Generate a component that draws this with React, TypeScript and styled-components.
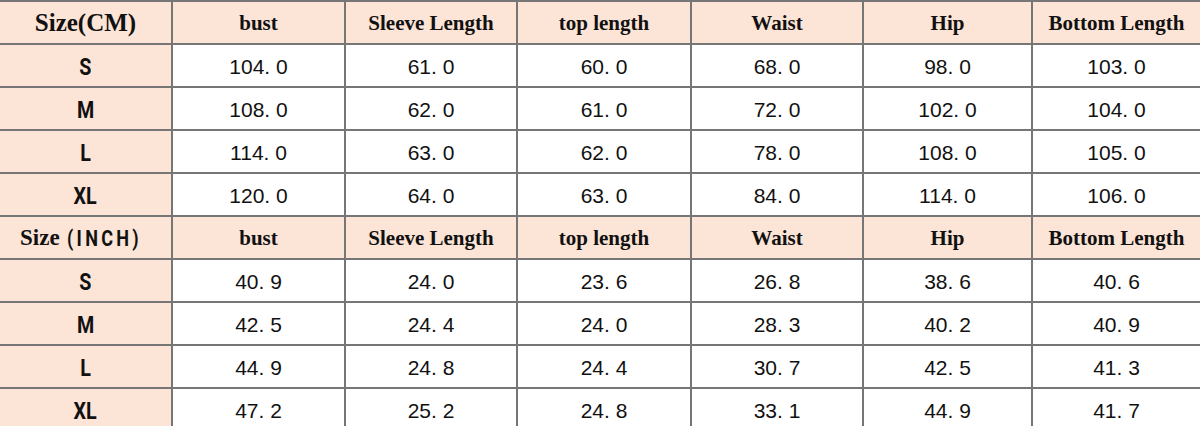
import React from 'react';
import styled, { createGlobalStyle } from 'styled-components';

const GlobalStyle = createGlobalStyle`
  html, body {
    margin: 0;
    padding: 0;
    background: #ffffff;
    overflow: hidden;
  }
`;

const LINE = '#767676';
const PEACH = '#fce4d6';

const Sheet = styled.div`
  width: 1200px;
  height: 426px;
  overflow: hidden;
  border-top: 2px solid ${LINE};
  box-sizing: border-box;
`;

const Row = styled.div<{ $head?: boolean }>`
  display: grid;
  grid-template-columns: 173px 173px 172px 174px 172px 169px 1fr;
  height: 43px;
  background: ${(p) => (p.$head ? PEACH : '#ffffff')};
`;

const Cell = styled.div<{ $last?: boolean }>`
  display: flex;
  align-items: center;
  justify-content: center;
  box-sizing: border-box;
  border-bottom: 2px solid ${LINE};
  border-right: ${(p) => (p.$last ? 'none' : `2px solid ${LINE}`)};
  white-space: nowrap;
  color: #111;
`;

const SizeCell = styled(Cell)`
  background: ${PEACH};
  padding-top: 2px;
`;

/* tall, narrow bold sans used for the size letters */
const Narrow = styled.span<{ $size?: number }>`
  display: inline-block;
  font-family: Roboto, 'Liberation Sans', sans-serif;
  font-weight: bold;
  font-size: ${(p) => p.$size ?? 24}px;
  transform: scaleX(0.82);
  transform-origin: center;
`;

const HeadCell = styled(Cell)`
  font-family: 'Liberation Serif', serif;
  font-weight: bold;
  font-size: 21px;
  padding-top: 1px;
`;

const CornerCell = styled(HeadCell)`
  font-size: 25px;
`;

const InchCorner = styled(HeadCell)`
  font-size: 23px;
  justify-content: flex-start;
  padding-left: 20px;
`;

const InchLabel = styled(Narrow)`
  letter-spacing: 4px;
  margin-left: 7px;
  transform-origin: left center;
`;

const Value = styled(Cell)`
  font-family: 'Liberation Sans', Arial, sans-serif;
  font-size: 21px;
  padding-top: 2px;
`;

const columns = ['bust', 'Sleeve Length', 'top length', 'Waist', 'Hip', 'Bottom Length'];

const cm: [string, string[]][] = [
  ['S', ['104. 0', '61. 0', '60. 0', '68. 0', '98. 0', '103. 0']],
  ['M', ['108. 0', '62. 0', '61. 0', '72. 0', '102. 0', '104. 0']],
  ['L', ['114. 0', '63. 0', '62. 0', '78. 0', '108. 0', '105. 0']],
  ['XL', ['120. 0', '64. 0', '63. 0', '84. 0', '114. 0', '106. 0']],
];

const inch: [string, string[]][] = [
  ['S', ['40. 9', '24. 0', '23. 6', '26. 8', '38. 6', '40. 6']],
  ['M', ['42. 5', '24. 4', '24. 0', '28. 3', '40. 2', '40. 9']],
  ['L', ['44. 9', '24. 8', '24. 4', '30. 7', '42. 5', '41. 3']],
  ['XL', ['47. 2', '25. 2', '24. 8', '33. 1', '44. 9', '41. 7']],
];

const ColumnHeads: React.FC = () => (
  <>
    {columns.map((c, i) => (
      <HeadCell key={c} $last={i === columns.length - 1}>{c}</HeadCell>
    ))}
  </>
);

const DataRows: React.FC<{ rows: [string, string[]][] }> = ({ rows }) => (
  <>
    {rows.map(([size, vals]) => (
      <Row key={size}>
        <SizeCell><Narrow>{size}</Narrow></SizeCell>
        {vals.map((v, i) => (
          <Value key={i} $last={i === vals.length - 1}>{v}</Value>
        ))}
      </Row>
    ))}
  </>
);

const App: React.FC = () => (
  <>
    <GlobalStyle />
    <Sheet>
      <Row $head>
        <CornerCell>Size(CM)</CornerCell>
        <ColumnHeads />
      </Row>
      <DataRows rows={cm} />
      <Row $head>
        <InchCorner>
          Size<InchLabel $size={22}>(INCH)</InchLabel>
        </InchCorner>
        <ColumnHeads />
      </Row>
      <DataRows rows={inch} />
    </Sheet>
  </>
);

export default App;
